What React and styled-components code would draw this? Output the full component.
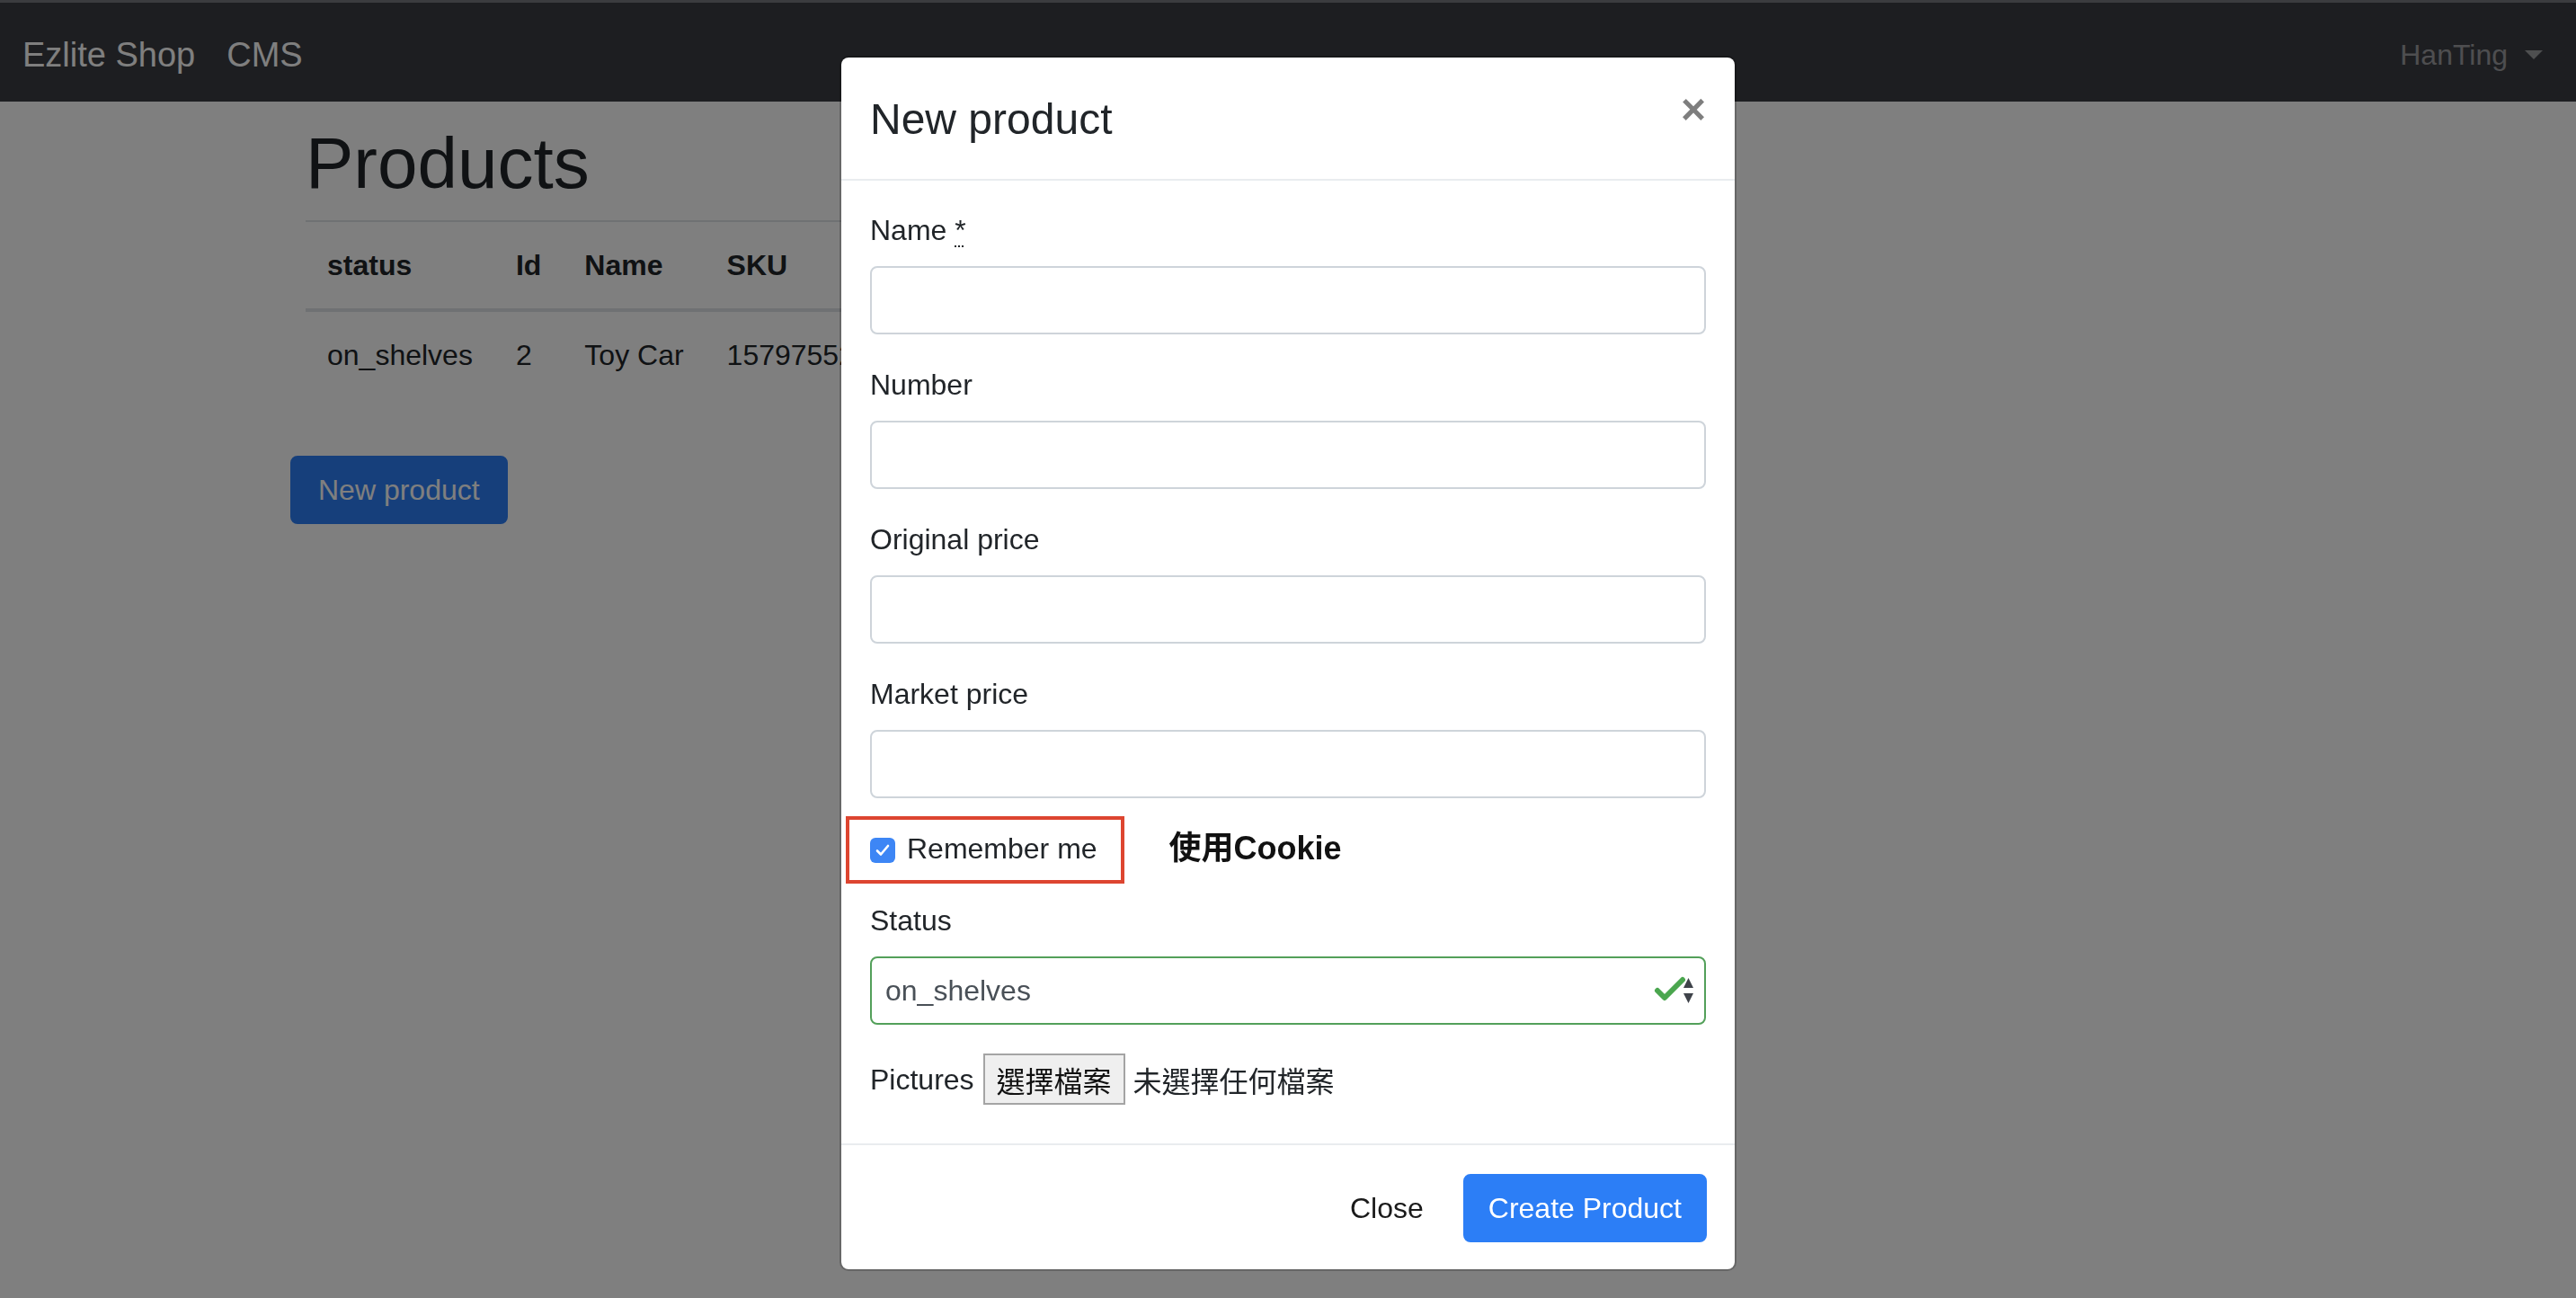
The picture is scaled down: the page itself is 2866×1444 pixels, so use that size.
import React from 'react';
import styled, { createGlobalStyle } from 'styled-components';

const GlobalStyle = createGlobalStyle`
  html, body { margin: 0; padding: 0; }
  *, *::before, *::after { box-sizing: border-box; }
  body {
    width: 2866px;
    height: 1444px;
    overflow: hidden;
    background: #ffffff;
    color: #212529;
    font-family: "Liberation Sans", "Noto Sans CJK TC", Arial, sans-serif;
    font-size: 32px;
    line-height: 48px;
  }
`;

const Navbar = styled.nav`
  height: 113px;
  background: #3a3c42;
  border-top: 3px solid #76787e;
  display: flex;
  align-items: center;
  justify-content: space-between;
  padding: 6px 37px 0 25px;
`;

const BrandGroup = styled.div`
  display: flex;
  align-items: center;
  gap: 35px;
`;

const Brand = styled.a`
  font-size: 38px;
  line-height: 57px;
  color: #ffffff;
  text-decoration: none;
`;

const UserMenu = styled.a`
  display: flex;
  align-items: center;
  font-size: 32px;
  line-height: 48px;
  color: rgba(255, 255, 255, 0.5);
  text-decoration: none;
  &::after {
    content: "";
    margin-left: 19px;
    border-top: 10px solid rgba(255, 255, 255, 0.5);
    border-left: 10px solid transparent;
    border-right: 10px solid transparent;
  }
`;

const Container = styled.main`
  width: 2280px;
  margin: 0 auto;
  padding: 0 30px;
`;

const Section = styled.section`
  padding: 0 17px;
`;

const PageTitle = styled.h1`
  margin: 21px 0 15px;
  font-size: 80px;
  line-height: 96px;
  font-weight: 500;
  color: #212529;
`;

const Table = styled.table`
  border-collapse: separate;
  border-spacing: 0;
  margin-bottom: 64px;
  th, td {
    padding: 24px;
    text-align: left;
    white-space: nowrap;
    vertical-align: top;
  }
  th {
    font-weight: 700;
    border-top: 2px solid #dee2e6;
    border-bottom: 4px solid #dee2e6;
  }
`;

const PrimaryButton = styled.button`
  font-family: inherit;
  font-size: 32px;
  line-height: 48px;
  padding: 12px ${(p) => (p.$wide ? '29px' : '26px')};
  border-radius: 8px;
  border: 2px solid #2c7ef6;
  background: #2c7ef6;
  color: #ffffff;
  cursor: pointer;
`;

const Backdrop = styled.div`
  position: fixed;
  inset: 0;
  background: rgba(0, 0, 0, 0.5);
`;

const ModalLayer = styled.div`
  position: fixed;
  inset: 0;
  display: flex;
  justify-content: center;
  align-items: flex-start;
  padding-top: 62px;
`;

const ModalContent = styled.div`
  width: 998px;
  background: #ffffff;
  border: 2px solid rgba(0, 0, 0, 0.2);
  background-clip: padding-box;
  border-radius: 10px;
  display: flex;
  flex-direction: column;
`;

const ModalHeader = styled.div`
  display: flex;
  justify-content: space-between;
  align-items: flex-start;
  padding: 33px 32px 30px;
  border-bottom: 2px solid #e9ecef;
`;

const ModalTitle = styled.h4`
  margin: 0;
  font-size: 48px;
  line-height: 72px;
  font-weight: 500;
  color: #212529;
`;

const CloseX = styled.button`
  margin-top: 1px;
  padding: 0;
  border: 0;
  background: transparent;
  font-family: "Liberation Sans", Arial, sans-serif;
  font-size: 48px;
  line-height: 48px;
  font-weight: 700;
  color: #000000;
  opacity: 0.5;
  cursor: pointer;
`;

const ModalBody = styled.div`
  padding: 31px 32px 43px;
`;

const FormGroup = styled.div`
  margin-bottom: ${(p) => (p.$last ? '0' : '32px')};
`;

const Label = styled.label`
  display: block;
  margin-bottom: 16px;
  line-height: 48px;
  abbr {
    text-decoration: underline dotted;
    text-decoration-thickness: 2px;
    text-underline-offset: 6px;
    border: 0;
    cursor: help;
  }
`;

const Input = styled.input`
  display: block;
  width: 100%;
  height: 76px;
  padding: 12px 24px;
  font-family: inherit;
  font-size: 32px;
  color: #495057;
  background: #ffffff;
  border: 2px solid #ced4da;
  border-radius: 8px;
  outline: none;
`;

const CheckRow = styled.div`
  position: relative;
  display: flex;
  align-items: center;
  height: 48px;
  margin-bottom: 32px;
`;

const CheckBox = styled.span`
  width: 28px;
  height: 28px;
  margin-top: 3px;
  border-radius: 6px;
  background: #3d86f5;
  display: inline-flex;
  align-items: center;
  justify-content: center;
`;

const CheckLabel = styled.span`
  margin-left: 13px;
`;

const Annotation = styled.span`
  margin-left: 80px;
  font-size: 36px;
  font-weight: 700;
  color: #111111;
`;

const HighlightFrame = styled.div`
  position: absolute;
  left: -27px;
  top: -12px;
  width: 310px;
  height: 75px;
  border: 4px solid #dd4530;
  pointer-events: none;
`;

const SelectBox = styled.div`
  display: flex;
  align-items: center;
  height: 76px;
  padding: 0 10px 0 15px;
  border: 2px solid #53a05a;
  border-radius: 8px;
  color: #495057;
  font-size: 32px;
`;

const SelectIcons = styled.svg`
  margin-left: auto;
  flex: none;
`;

const FileRow = styled.div`
  display: flex;
  align-items: center;
  height: 57px;
`;

const FileButton = styled.button`
  height: 57px;
  margin-left: 10px;
  padding: 0 13px;
  font-family: "Noto Sans CJK TC", "Liberation Sans", sans-serif;
  font-size: 32px;
  color: #111111;
  background: #efefef;
  border: 2px solid #a4a4a4;
  border-radius: 0;
`;

const FileName = styled.span`
  margin-left: 9px;
  font-family: "Noto Sans CJK TC", "Liberation Sans", sans-serif;
`;

const ModalFooter = styled.div`
  display: flex;
  justify-content: flex-end;
  align-items: center;
  gap: 18px;
  padding: 32px 31px 30px;
  border-top: 2px solid #e9ecef;
`;

const TextButton = styled.button`
  font-family: inherit;
  font-size: 32px;
  line-height: 48px;
  padding: 12px 24px;
  border: 2px solid transparent;
  background: transparent;
  color: #1a1a1a;
  cursor: pointer;
`;

const columns = ['status', 'Id', 'Name', 'SKU', 'Original price', 'Market price'];
const rows = [['on_shelves', '2', 'Toy Car', '1579755213', '100', '80']];

export default function App() {
  return (
    <>
      <GlobalStyle />
      <Navbar>
        <BrandGroup>
          <Brand href="#">Ezlite Shop</Brand>
          <Brand href="#">CMS</Brand>
        </BrandGroup>
        <UserMenu href="#">HanTing</UserMenu>
      </Navbar>
      <Container>
        <Section>
          <PageTitle>Products</PageTitle>
          <Table>
            <thead>
              <tr>
                {columns.map((c) => (
                  <th key={c}>{c}</th>
                ))}
              </tr>
            </thead>
            <tbody>
              {rows.map((r, i) => (
                <tr key={i}>
                  {r.map((v, j) => (
                    <td key={j}>{v}</td>
                  ))}
                </tr>
              ))}
            </tbody>
          </Table>
        </Section>
        <PrimaryButton $wide>New product</PrimaryButton>
      </Container>

      <Backdrop />
      <ModalLayer>
        <ModalContent>
          <ModalHeader>
            <ModalTitle>New product</ModalTitle>
            <CloseX aria-label="Close">×</CloseX>
          </ModalHeader>
          <ModalBody>
            <FormGroup>
              <Label>
                Name <abbr title="required">*</abbr>
              </Label>
              <Input type="text" />
            </FormGroup>
            <FormGroup>
              <Label>Number</Label>
              <Input type="text" />
            </FormGroup>
            <FormGroup>
              <Label>Original price</Label>
              <Input type="text" />
            </FormGroup>
            <FormGroup>
              <Label>Market price</Label>
              <Input type="text" />
            </FormGroup>
            <CheckRow>
              <CheckBox>
                <svg width="18" height="16" viewBox="0 0 18 16">
                  <path d="M3 8.5 L7 12.5 L15 3" fill="none" stroke="#ffffff" strokeWidth="2.6" strokeLinecap="round" strokeLinejoin="round" />
                </svg>
              </CheckBox>
              <CheckLabel>Remember me</CheckLabel>
              <Annotation>使用Cookie</Annotation>
              <HighlightFrame />
            </CheckRow>
            <FormGroup>
              <Label>Status</Label>
              <SelectBox>
                <span>on_shelves</span>
                <SelectIcons width="46" height="32" viewBox="0 0 46 32">
                  <path d="M4 16 L12 24 L32 4" fill="none" stroke="#4aa64e" strokeWidth="6" strokeLinecap="round" strokeLinejoin="round" />
                  <path d="M38.5 2 L44 13 L33 13 Z" fill="#3f434a" />
                  <path d="M33 19 L44 19 L38.5 30 Z" fill="#3f434a" />
                </SelectIcons>
              </SelectBox>
            </FormGroup>
            <FormGroup $last>
              <FileRow>
                <span>Pictures</span>
                <FileButton>選擇檔案</FileButton>
                <FileName>未選擇任何檔案</FileName>
              </FileRow>
            </FormGroup>
          </ModalBody>
          <ModalFooter>
            <TextButton>Close</TextButton>
            <PrimaryButton>Create Product</PrimaryButton>
          </ModalFooter>
        </ModalContent>
      </ModalLayer>
    </>
  );
}
